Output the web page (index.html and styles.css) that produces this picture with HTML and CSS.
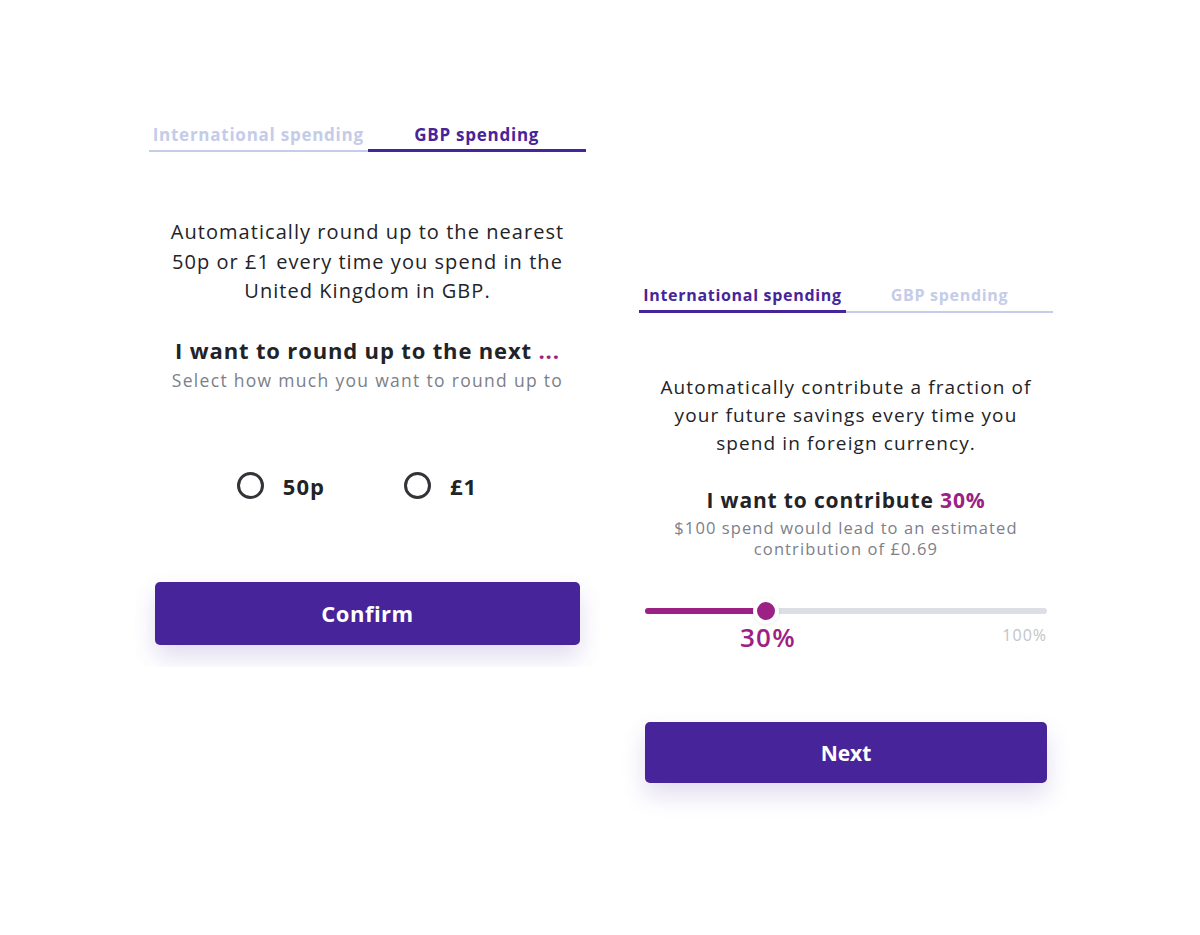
FILE: index.html
```html
<!DOCTYPE html>
<html>
<head>
<meta charset="utf-8">
<link rel="stylesheet" href="styles.css">
</head>
<body>
<div class="page">
  <section class="panel panel-left">
    <div class="tabs">
      <div class="tab">International spending</div>
      <div class="tab active">GBP spending</div>
    </div>
    <p class="desc">Automatically round up to the nearest 50p or £1 every time you spend in the United Kingdom in GBP.</p>
    <h2 class="title">I want to round up to the next <span class="accent">...</span></h2>
    <p class="sub">Select how much you want to round up to</p>
    <div class="radios">
      <label class="radio"><span class="circle"></span><span class="rlabel">50p</span></label>
      <label class="radio"><span class="circle"></span><span class="rlabel">£1</span></label>
    </div>
    <button class="btn btn-confirm">Confirm</button>
  </section>

  <section class="panel panel-right">
    <div class="tabs">
      <div class="tab active">International spending</div>
      <div class="tab">GBP spending</div>
    </div>
    <p class="desc desc-r">Automatically contribute a fraction of your future savings every time you spend in foreign currency.</p>
    <h2 class="title title-r">I want to contribute <span class="accent">30%</span></h2>
    <p class="sub sub-r">$100 spend would lead to an estimated contribution of £0.69</p>
    <div class="slider">
      <div class="track"><div class="fill" style="width:30%"></div><div class="thumb" style="left:30%"></div></div>
      <div class="scale">
        <span class="val">30%</span>
        <span class="max">100%</span>
      </div>
    </div>
    <button class="btn btn-next">Next</button>
  </section>
</div>
</body>
</html>
```
FILE: styles.css
```css
* { box-sizing: border-box; }
html, body { margin: 0; padding: 0; background: #fff; }
body { font-family: "Open Sans", "Liberation Sans", sans-serif; color: #222327; }

.page {
  display: flex;
  align-items: flex-start;
  padding-left: 135px;
  gap: 30px;
}

.panel {
  display: flex;
  flex-direction: column;
  align-items: stretch;
  background: #fff;
}

.panel-left {
  width: 465px;
  margin-top: 121px;
  padding: 0 20px 22px;
  overflow: hidden;
  height: 546px;
}

.panel-right {
  width: 431px;
  margin-top: 282px;
  padding: 0 14px 40px 15px;
}

.tabs {
  display: flex;
  margin: 0 -6px;
}
.tab {
  flex: 1;
  text-align: center;
  font-size: 17px;
  font-weight: 700;
  color: #c4cce9;
  line-height: 27px;
  padding-bottom: 2px;
  border-bottom: 2px solid #c4cce9;
  letter-spacing: 0.75px;
}
.tab.active {
  color: #47249a;
  border-bottom: 3px solid #47249a;
  padding-bottom: 1px;
}
.panel-right .tab { font-size: 16px; line-height: 27px; letter-spacing: 0.7px; }

.desc {
  margin: 65px 0 0;
  text-align: center;
  font-size: 20px;
  line-height: 29.5px;
  letter-spacing: 1.05px;
  padding: 0;
}
.desc-r {
  margin-top: 60px;
  font-size: 19px;
  line-height: 28px;
  letter-spacing: 1.1px;
}

.title {
  margin: 29px 0 0;
  text-align: center;
  font-size: 22px;
  font-weight: 700;
  line-height: 30px;
  letter-spacing: 0.85px;
  color: #222327;
}
.title-r { margin-top: 29px; font-size: 21px; line-height: 28px; letter-spacing: 0.85px; }
.accent { color: #9b2184; }

.sub {
  margin: 0;
  text-align: center;
  font-size: 17.5px;
  line-height: 30px;
  letter-spacing: 1.3px;
  color: #7c8089;
}
.sub-r { font-size: 16.5px; line-height: 21px; margin-top: 3px; padding: 0 10px; letter-spacing: 1.1px; }

.radios {
  display: flex;
  justify-content: center;
  gap: 79px;
  margin-top: 76px;
  padding-right: 21px;
}
.radio {
  display: flex;
  align-items: center;
  gap: 19px;
}
.circle {
  width: 27px;
  height: 27px;
  border: 3px solid #333438;
  border-radius: 50%;
}
.rlabel {
  font-size: 22px;
  font-weight: 700;
  color: #222327;
  line-height: 30px;
  letter-spacing: 1px;
}

.btn {
  display: block;
  width: 100%;
  border: 0;
  border-radius: 5px;
  background: #47249a;
  color: #fff;
  font-family: inherit;
  font-weight: 700;
  box-shadow: 0 12px 24px rgba(71, 36, 154, 0.16);
}
.btn-confirm {
  margin-top: 81px;
  height: 64px;
  font-size: 22px;
  letter-spacing: 0.5px;
}
.btn-next {
  margin-top: 69px;
  height: 61px;
  font-size: 21px;
}

.slider { margin-top: 49px; }
.track {
  position: relative;
  height: 6px;
  border-radius: 3px;
  background: #dcdfe3;
}
.fill {
  height: 6px;
  border-radius: 3px;
  background: #9b2184;
}
.thumb {
  position: absolute;
  top: 50%;
  width: 26px;
  height: 26px;
  margin-left: -13px;
  margin-top: -13px;
  border-radius: 50%;
  background: #9b2184;
  border: 4px solid #fff;
  box-shadow: 0 1px 4px rgba(0,0,0,0.08);
}
.scale {
  display: flex;
  justify-content: space-between;
  align-items: flex-start;
  margin-top: 7px;
}
.val {
  margin-left: 95px;
  font-size: 26px;
  font-weight: 600;
  color: #9b2184;
  line-height: 32px;
  letter-spacing: 1.2px;
}
.max {
  margin-top: 3px;
  font-size: 16px;
  color: #c2c4c8;
  line-height: 22px;
  letter-spacing: 1px;
}
```
